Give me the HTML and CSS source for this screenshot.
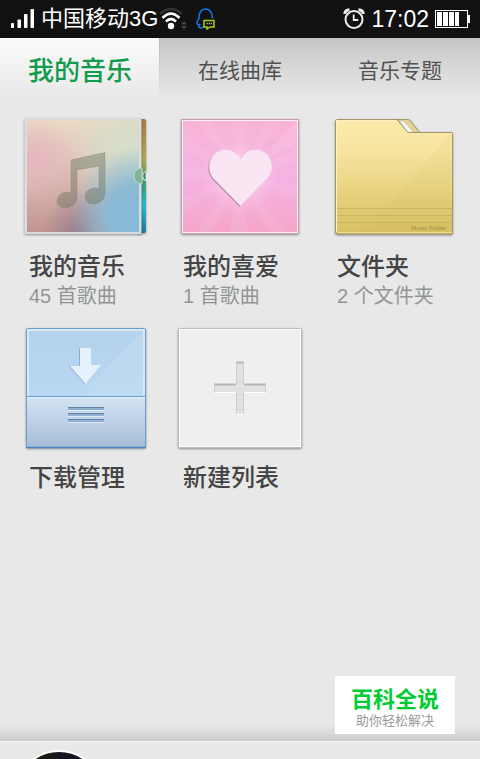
FILE: index.html
```html
<!DOCTYPE html>
<html lang="zh-CN">
<head>
    <meta charset="UTF-8">
    <meta name="viewport" content="width=device-width, initial-scale=1.0">
    <title>我的音乐</title>
    <link rel="stylesheet" href="styles.css">
</head>
<body>
    <!-- 状态栏 -->
    <header class="status-bar">
        <svg class="icon-signal" width="24" height="20" viewBox="0 0 24 20" fill="#fff">
            <rect x="0" y="14" width="3" height="5" rx=".8"/>
            <rect x="6.500" y="10.500" width="3.500" height="8.500" rx=".8"/>
            <rect x="13" y="5" width="3.500" height="14" rx=".8"/>
            <rect x="19.500" y="0" width="3.500" height="19" rx=".8"/>
        </svg>
        <span class="carrier">中国移动3G</span>
        <svg class="icon-wifi" width="30" height="24" viewBox="0 0 30 24" fill="none" stroke-width="2.600">
            <path d="M1 7Q12 -3 23 7" stroke="#333"/>
            <path d="M3.500 11Q12 2.500 20.500 11" stroke="#fff"/>
            <path d="M7 14.500Q12 9.500 17 14.500" stroke="#fff"/>
            <circle cx="12" cy="19" r="3.200" fill="#fff"/>
            <path d="M22 17.500l3-3.500 3 3.500zM22 19l3 3.500 3-3.500z" fill="#444"/>
        </svg>
        <svg class="icon-chat" width="20" height="22" viewBox="0 0 20 22" fill="none">
            <path d="M7 19.500Q4 20.500 2.500 19L4 16Q1.500 18 1 15Q1 12.500 3 10.500Q3 1 9.500 1Q16 1 16.500 10.500" stroke="#0b7bea" stroke-width="1.500"/>
            <path d="M8 12.500h10v6.500h-4l-3 2v-2H8z" stroke="#a5cf1c" stroke-width="1.500"/>
            <path d="M10.500 15.500h5.500" stroke="#a5cf1c" stroke-width="1.500" stroke-dasharray="1.300 .8"/>
        </svg>
        <svg class="icon-alarm" width="22" height="22" viewBox="0 0 22 22" fill="none" stroke="#eee">
            <circle cx="11" cy="11.500" r="8.500" stroke-width="2"/>
            <path d="M1.800 6Q2 2 6.500 1.800M20.200 6Q20 2 15.500 1.800" stroke-width="3"/>
            <path d="M10.700 6.500v5.500h4.500" stroke-width="1.800"/>
        </svg>
        <time class="clock">17:02</time>
        <svg class="icon-battery" width="35" height="18" viewBox="0 0 35 18">
            <rect x=".5" y=".5" width="32" height="17" fill="none" stroke="#fff"/>
            <path d="M33 5h2v8h-2z" fill="#fff"/>
            <path d="M2 2h5v14H2zM8 2h5v14H8zM14 2h5v14h-5zM20 2h4v14h-4z" fill="#fff"/>
        </svg>
    </header>

    <!-- 标签 -->
    <nav class="tabs">
        <a class="tab active" href="#mine">我的音乐</a>
        <a class="tab" href="#library">在线曲库</a>
        <a class="tab" href="#topics">音乐专题</a>
    </nav>

    <main class="content">
        <div class="grid">
            <button class="item" type="button">
                <svg class="art" viewBox="0 0 128 128">
                    <defs>
                        <linearGradient id="cover" x1="0" y1="0" x2="0" y2="1">
                            <stop offset="0" stop-color="#ecdac4"/>
                            <stop offset=".35" stop-color="#e0c5bd"/>
                            <stop offset="1" stop-color="#c39590"/>
                        </linearGradient>
                        <radialGradient id="coverBlue" cx="1" cy=".86" r=".62">
                            <stop offset="0" stop-color="#84bad8"/>
                            <stop offset=".45" stop-color="#8bbad3"/>
                            <stop offset="1" stop-color="#8bbad3" stop-opacity="0"/>
                        </radialGradient>
                        <radialGradient id="coverGreen" cx=".95" cy=".3" r=".6">
                            <stop offset="0" stop-color="#d6dfca"/>
                            <stop offset=".4" stop-color="#d6dfca" stop-opacity=".8"/>
                            <stop offset="1" stop-color="#d6dfca" stop-opacity="0"/>
                        </radialGradient>
                        <radialGradient id="coverPink" cx=".05" cy=".35" r=".4">
                            <stop offset="0" stop-color="#e7b6be"/>
                            <stop offset="1" stop-color="#e7b6be" stop-opacity="0"/>
                        </radialGradient>
                        <radialGradient id="coverDark" cx=".48" cy="1" r=".35">
                            <stop offset="0" stop-color="#967f90"/>
                            <stop offset="1" stop-color="#967f90" stop-opacity="0"/>
                        </radialGradient>
                        <linearGradient id="spine" x1="0" y1="0" x2="0" y2="1">
                            <stop offset="0" stop-color="#a97a48"/>
                            <stop offset=".35" stop-color="#b3a84b"/>
                            <stop offset=".55" stop-color="#3d9b75"/>
                            <stop offset=".75" stop-color="#27bccb"/>
                            <stop offset="1" stop-color="#217b9b"/>
                        </linearGradient>
                    </defs>
                    <path class="shadow" d="M116 5h6q2 0 2 2v50a5 5 0 0 0 0 10v50q0 2-2 2h-6z" fill="url(#spine)"/>
                    <g class="shadow">
                        <rect x="2.500" y="4" width="117" height="116" fill="#d9dde2"/>
                        <rect x="5" y="6" width="112" height="112" fill="url(#cover)"/>
                        <rect x="5" y="6" width="112" height="112" fill="url(#coverPink)"/>
                        <rect x="5" y="6" width="112" height="112" fill="url(#coverGreen)"/>
                        <rect x="5" y="6" width="112" height="112" fill="url(#coverDark)"/>
                        <rect x="5" y="6" width="112" height="112" fill="url(#coverBlue)"/>
                    </g>
                    <path d="M120 54a8 8 0 0 0 0 16z" fill="#7fb596" stroke="#b9d9be"/>
                    <path d="M123.500 57.500a5 5 0 0 0 0 9z" fill="#328862"/>
                    <path d="M123.500 57.500a5 5 0 0 0 0 9" fill="none" stroke="#d9e8d5" stroke-width=".8"/>
                    <path d="M49 46L83 38.500V80Q82 88 73 90Q64 91 63 83Q63 75 73 74Q76 74 77 75V52L55 56V84Q54 92 44 94Q36 94 35 87Q36 79 45 78Q48 78 49 79Z" fill="#6c7562" fill-opacity=".45" stroke="#777968" stroke-opacity=".3"/>
                </svg>
                <span class="name">我的音乐</span>
                <span class="count">45 首歌曲</span>
            </button>

            <button class="item" type="button">
                <svg class="art" viewBox="0 0 128 128">
                    <defs>
                        <linearGradient id="pink" x1="0" y1="0" x2="0" y2="1">
                            <stop offset="0" stop-color="#f8b4d5"/>
                            <stop offset=".5" stop-color="#f5b2e3"/>
                            <stop offset="1" stop-color="#f5a6c8"/>
                        </linearGradient>
                        <radialGradient id="pinkGlow">
                            <stop offset=".3" stop-color="#fde5f4"/>
                            <stop offset="1" stop-color="#fbc5e5" stop-opacity="0"/>
                        </radialGradient>
                    </defs>
                    <rect class="shadow" x="5" y="5" width="118" height="115" rx="1" fill="#c99caf"/>
                    <rect x="6.500" y="6.500" width="115" height="112" fill="url(#pink)" stroke="#fff0f8"/>
                    <path d="M64 60L7 20V35zM64 60L20 7H35zM64 60L55 7H72zM64 60L90 7H106zM64 60L121 35V50zM64 60L121 72V88zM64 60L110 118H92zM64 60L72 118H54zM64 60L36 118H20zM64 60L7 100V84zM64 60L7 66V52z" fill="#fff" fill-opacity=".07"/>
                    <path d="M121 7L80 50L121 30z" fill="#fff" fill-opacity=".1"/>
                    <circle cx="64" cy="62" r="40" fill="url(#pinkGlow)" fill-opacity=".6"/>
                    <path d="M64.500 92L37 64Q30 54 36 43C43 33 57 33 64.500 45C72 33 86 33 93 43Q99 54 92 64Z" fill="#bd8fa9" transform="translate(-1 1)"/>
                    <path d="M64.500 92L37 64Q30 54 36 43C43 33 57 33 64.500 45C72 33 86 33 93 43Q99 54 92 64Z" fill="#f9e6f2"/>
                </svg>
                <span class="name">我的喜爱</span>
                <span class="count">1 首歌曲</span>
            </button>

            <button class="item" type="button">
                <svg class="art" viewBox="0 0 128 128">
                    <defs>
                        <linearGradient id="folder" x1="0" y1="0" x2="0" y2="1">
                            <stop offset="0" stop-color="#fdebad"/>
                            <stop offset=".3" stop-color="#f6e39d"/>
                            <stop offset="1" stop-color="#d8bf61"/>
                        </linearGradient>
                    </defs>
                    <path class="shadow" d="M67 5.500H78Q80 5.500 82 9L90 19H76z" fill="#e7d391" stroke="#a4976a"/>
                    <path d="M69 7h5l10 12h-7z" fill="#f8f8f4" stroke="#c9c5b6"/>
                    <path class="shadow" d="M5.500 7.500Q5.500 5.500 7.500 5.500H67L77 17.500Q78 18.500 80 18.500H121Q122.500 18.500 122.500 20V118Q122.500 120 121 120H7.500Q5.500 120 5.500 118z" fill="url(#folder)" stroke="#a4976a"/>
                    <path d="M6.500 118V6.500H66" fill="none" stroke="#fff3bf"/>
                    <path d="M120 20L36 118H121V20z" fill="#c5ad50" fill-opacity=".08"/>
                    <path d="M7 94.500h115M7 101.500h115M7 108.500h115" stroke="#c5ad59" stroke-opacity=".7"/>
                    <path d="M7 118.500h115" stroke="#f1df91"/>
                    <text class="folder-mark" x="81" y="116">Music Folder</text>
                </svg>
                <span class="name">文件夹</span>
                <span class="count">2 个文件夹</span>
            </button>

            <button class="item" type="button">
                <svg class="art" viewBox="0 0 128 128">
                    <defs>
                        <linearGradient id="blueTop" x1="0" y1="0" x2="0" y2="1">
                            <stop offset="0" stop-color="#b5d2ec"/>
                            <stop offset="1" stop-color="#b9daf5"/>
                        </linearGradient>
                        <linearGradient id="blueBottom" x1="0" y1="0" x2="0" y2="1">
                            <stop offset="0" stop-color="#d5e4f3"/>
                            <stop offset="1" stop-color="#a5bcd7"/>
                        </linearGradient>
                    </defs>
                    <rect class="shadow" x="4.500" y="3.500" width="119" height="119" rx="1" fill="url(#blueTop)" stroke="#6b9fce"/>
                    <path d="M6 71V5H122V71" fill="none" stroke="#e4f0fa" stroke-width="1.500"/>
                    <path d="M121 6L58 71H121z" fill="#fff" fill-opacity=".1"/>
                    <rect x="4.500" y="71.500" width="119" height="51" fill="url(#blueBottom)" stroke="#6b9fce"/>
                    <path d="M5 72.500h118" stroke="#e3effa"/>
                    <path d="M4 122.500h120" stroke="#4c86c3" stroke-width="1.500"/>
                    <path d="M58 23H69V40H79L63.500 59L48 41H58z" fill="#8facc8" transform="translate(-1 0)"/>
                    <path d="M58 23H69V40H79L63.500 59L48 41H58z" fill="#e5f1fc"/>
                    <path d="M46 82h36v3H46zM46 88h36v3H46zM46 94h36v3H46z" fill="#8eafd2"/>
                    <path d="M46 82.500h36M46 88.500h36M46 94.500h36" stroke="#6684a8"/>
                    <path d="M46 85.500h36M46 91.500h36M46 97.500h36" stroke="#dbe8f5"/>
                </svg>
                <span class="name">下载管理</span>
            </button>

            <button class="item" type="button">
                <svg class="art" viewBox="0 0 128 128">
                    <rect class="shadow" x="2.500" y="3.500" width="123" height="119" rx="1" fill="#efefef" stroke="#bdbdbd"/>
                    <rect x="3.500" y="4.500" width="121" height="117" fill="none" stroke="#fff"/>
                    <path d="M60 37h8v22h22v8H68v22h-8V67H38v-8h22z" fill="#e1e1e1"/>
                    <path d="M60 37.500h8M38 59.500h22M68 59.500h22" stroke="#b5b5b5" stroke-width="2"/>
                    <path d="M60.500 37v22M60.500 67v22M67.500 37v22M67.500 67v22M38.500 59v8M89.500 59v8" stroke="#ccc" stroke-width=".8"/>
                    <path d="M60 89.500h8M38 67.500h22M68 67.500h22" stroke="#fff"/>
                </svg>
                <span class="name">新建列表</span>
            </button>
        </div>

        <div class="badge">
            <strong>百科全说</strong>
            <span>助你轻松解决</span>
        </div>
    </main>

    <!-- 播放器 -->
    <footer class="player">
        <div class="disc"></div>
    </footer>
</body>
</html>
```

FILE: styles.css
```css
* {
    box-sizing: border-box;
}
body {
    margin: 0;
    height: 100vh;
    display: flex;
    flex-direction: column;
    overflow: hidden;
    background-color: #e8e8e8;
    color: #444;
    font-family: "Liberation Sans", "Noto Sans CJK SC", sans-serif;
}
.status-bar {
    flex: none;
    display: flex;
    align-items: center;
    height: 38px;
    padding: 0 10px 0 11px;
    background-color: #111;
    color: #fff;
}
.carrier {
    margin-left: 6px;
    font-size: 22px;
    line-height: 38px;
    white-space: nowrap;
}
.icon-wifi {
    margin-left: 1px;
}
.icon-chat {
    margin-left: 7px;
}
.icon-alarm {
    margin-left: auto;
}
.clock {
    margin: 0 6px;
    font-size: 23px;
    line-height: 38px;
}
.tabs {
    flex: none;
    display: flex;
    height: 66px;
    background: linear-gradient(#c4c4c4, #d6d6d6 40%, #e8e8e8 92%);
}
.tab {
    flex: 1;
    color: #505250;
    font-size: 21px;
    line-height: 66px;
    text-align: center;
    text-decoration: none;
}
.tab.active {
    background:
        linear-gradient(#b8b8b8, #e8e8e8 92%) right / 1px 100% no-repeat,
        linear-gradient(#fbfbfb, #e8e8e8 92%);
    color: #119b4c;
    font-size: 26px;
    font-weight: 500;
}
.content {
    flex: 1;
    min-height: 0;
    position: relative;
    padding: 10px 22px;
    background: linear-gradient(transparent, #cbcbcb) bottom / 100% 16px no-repeat;
}
.grid {
    display: grid;
    grid-template-columns: repeat(3, 1fr);
    column-gap: 26px;
    row-gap: 16px;
}
.item {
    display: flex;
    flex-direction: column;
    padding: 0;
    border: none;
    background: none;
    color: inherit;
    font-family: inherit;
    text-align: left;
    cursor: pointer;
}
.art {
    width: 100%;
}
.shadow {
    filter: drop-shadow(0 1px 1px rgba(0,0,0,0.4));
}
.folder-mark {
    fill: #a18b45;
    font-family: "Noto Sans", sans-serif;
    font-size: 6px;
}
.name {
    margin: 11px 0 0 7px;
    font-size: 24px;
    font-weight: 500;
    line-height: 28px;
}
.count {
    margin: 2px 0 0 7px;
    color: #929693;
    font-size: 20px;
    line-height: 26px;
}
.badge {
    position: absolute;
    right: 25px;
    bottom: 7px;
    display: flex;
    flex-direction: column;
    align-items: center;
    width: 120px;
    padding: 11px 0 6px;
    background-color: #fff;
    color: #999;
    font-size: 13px;
    line-height: 15px;
}
.badge strong {
    color: #0c3;
    font-size: 22px;
    font-weight: 700;
    line-height: 26px;
}
.player {
    flex: none;
    height: 18px;
    padding: 8px 15px;
    overflow: hidden;
    border-top: 1px solid #f3f3f3;
    background-color: #e9e9e9;
}
.disc {
    width: 88px;
    height: 88px;
    border: 2px solid #fff;
    border-radius: 50%;
    background: linear-gradient(100deg, #1c1d10 20%, #17131f 50%, #120f2b);
}
```
